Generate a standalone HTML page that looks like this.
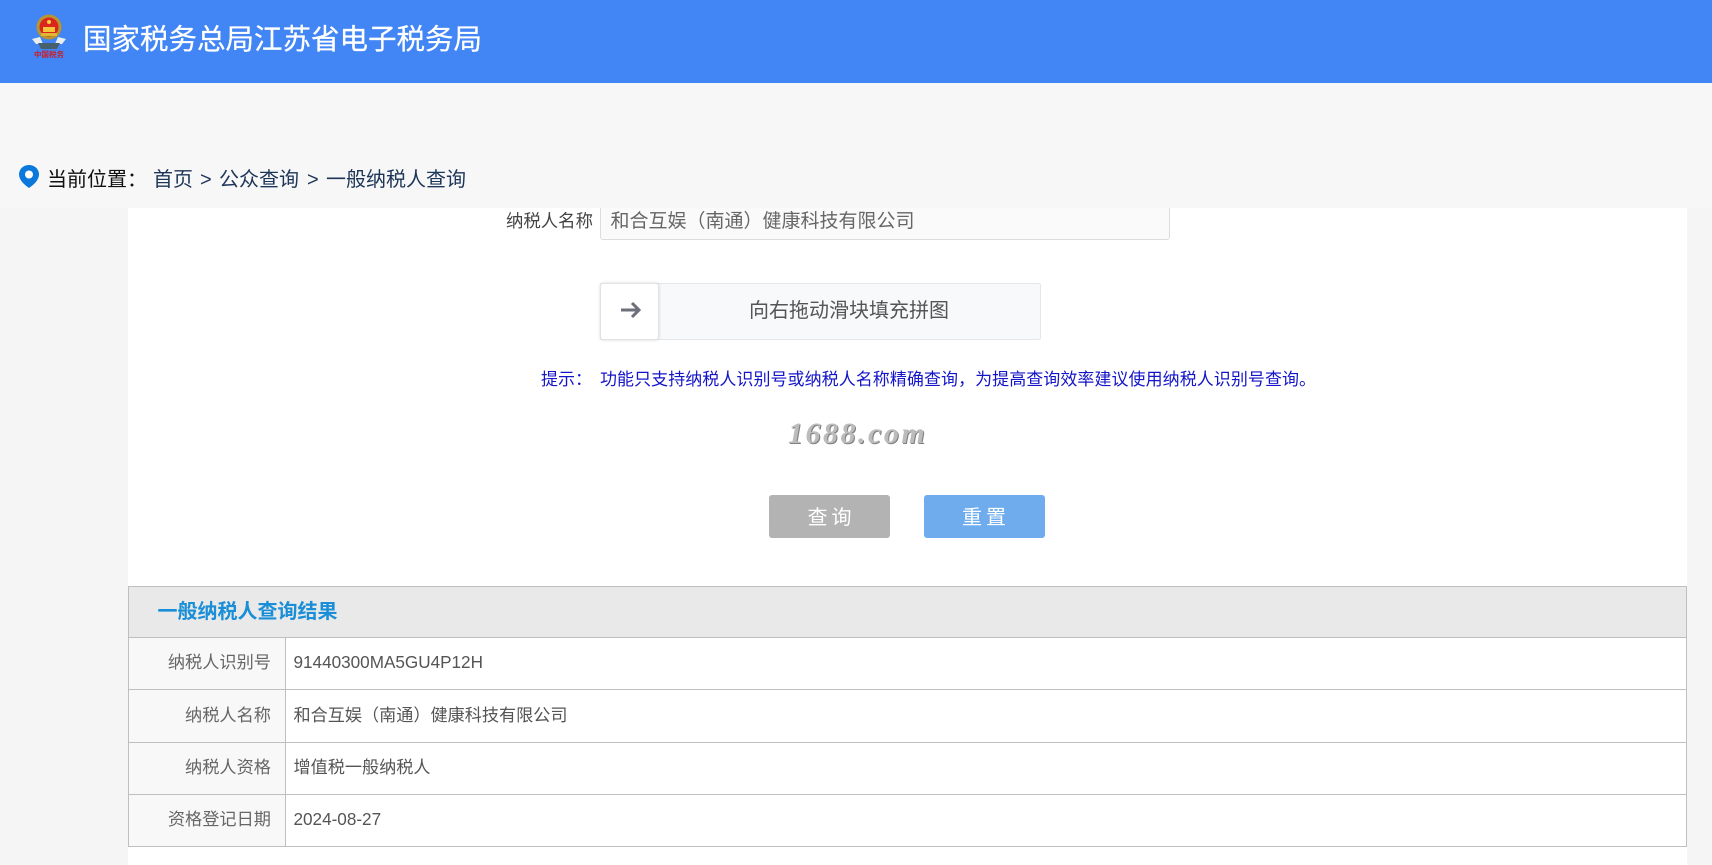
<!DOCTYPE html>
<html lang="zh-CN">
<head>
<meta charset="utf-8">
<title>一般纳税人查询</title>
<style>
html,body{margin:0;padding:0;width:1712px;height:865px;overflow:hidden;background:#f5f5f5;}
body{position:relative;font-family:"Liberation Sans","Noto Sans CJK SC",sans-serif;}
.a{position:absolute;white-space:nowrap;}
.t{position:absolute;white-space:nowrap;line-height:30px;height:30px;}
.cell{position:absolute;background:#bfbfbf;}
.lab{position:absolute;white-space:nowrap;line-height:30px;height:30px;font-size:17.2px;color:#666;text-align:right;left:130px;width:141px;}
.val{position:absolute;white-space:nowrap;line-height:30px;height:30px;font-size:17.14px;color:#555;left:293.500px;}
</style>
</head>
<body>
<div class="a" style="left:0;top:0;width:1712px;height:83px;background:#4285f4;"></div>
<svg class="a" style="left:30px;top:12px;" width="38" height="50" viewBox="0 0 38 50">
  <path d="M2 27 L10 25 L13 32 L6 32Z" fill="#e8eef2"/>
  <path d="M36 27 L28 25 L25 32 L32 32Z" fill="#e8eef2"/>
  <path d="M8 31 L30 31 L27 37 L11 37Z" fill="#47606e"/>
  <circle cx="19" cy="15" r="12.5" fill="#b8952f"/>
  <circle cx="19" cy="15" r="9.5" fill="#d9251d"/>
  <circle cx="19" cy="10" r="2" fill="#f6d23d"/>
  <rect x="13" y="15" width="12" height="5" fill="#f4c63a"/>
  <rect x="11" y="21" width="16" height="3" fill="#e3b534"/>
  <text x="19" y="45" text-anchor="middle" font-size="7.5" fill="#c8202a" font-family="Noto Sans CJK SC,sans-serif" font-weight="700">中国税务</text>
</svg>
<div class="a" style="left:83px;top:18px;line-height:44px;font-size:28.5px;color:#fff;-webkit-text-stroke:.25px #fff;">国家税务总局江苏省电子税务局</div>

<div class="a" style="left:0;top:83px;width:1712px;height:125px;background:#f7f7f7;"></div>
<svg class="a" style="left:18px;top:164px;" width="22" height="25" viewBox="0 0 22 25">
  <path d="M11 1C5 1 1 5.500 1 10.500C1 16 6.500 21 11 24C15.500 21 21 16 21 10.500C21 5.500 17 1 11 1Z" fill="#0b78dc"/>
  <circle cx="11" cy="10.500" r="4" fill="#fff"/>
</svg>
<div class="t" style="left:47px;top:165px;font-size:20px;color:#111;">当前位置：</div>
<div class="t" style="left:153px;top:165px;font-size:20px;color:#1d3557;">首页</div>
<div class="t" style="left:200px;top:165px;font-size:20px;color:#1d3557;">&gt;</div>
<div class="t" style="left:219px;top:165px;font-size:20px;color:#1d3557;">公众查询</div>
<div class="t" style="left:307px;top:165px;font-size:20px;color:#1d3557;">&gt;</div>
<div class="t" style="left:326px;top:165px;font-size:20px;color:#1d3557;">一般纳税人查询</div>

<div class="a" style="left:128px;top:208px;width:1559px;height:657px;background:#fff;"></div>

<div class="t" style="left:506px;top:206px;font-size:17.4px;color:#444;">纳税人名称</div>
<div class="a" style="left:600px;top:208px;width:568px;height:31px;background:#fafafa;border:1px solid #ddd;border-top:0;border-radius:0 0 3px 3px;"></div>
<div class="t" style="left:610.500px;top:207px;font-size:19px;color:#666;">和合互娱（南通）健康科技有限公司</div>

<div class="a" style="left:600px;top:283px;width:439px;height:55px;background:#f7f9fa;border:1px solid #e4e7eb;border-radius:2px;"></div>
<div class="a" style="left:600px;top:283px;width:57px;height:55px;background:#fff;border:1px solid #e2e2e2;border-radius:3px;box-shadow:0 0 3px rgba(0,0,0,.15);"></div>
<svg class="a" style="left:620px;top:300px;" width="22" height="20" viewBox="0 0 22 20">
  <path d="M1 10H19M12 3L19 10L12 17" fill="none" stroke="#6d6f7b" stroke-width="3"/>
</svg>
<div class="t" style="left:749px;top:296px;font-size:20px;color:#555;">向右拖动滑块填充拼图</div>

<div class="t" style="left:541px;top:365px;font-size:17px;color:#1414c8;">提示：</div>
<div class="t" style="left:600px;top:365px;font-size:17px;letter-spacing:.05px;color:#1414c8;">功能只支持纳税人识别号或纳税人名称精确查询，为提高查询效率建议使用纳税人识别号查询。</div>

<div class="a" style="left:788px;top:418px;line-height:32px;font-family:'Liberation Serif',serif;font-style:italic;font-weight:700;font-size:30px;letter-spacing:2.500px;color:#bcbcbc;text-shadow:1px 1px 0 #808080;">1688.com</div>

<div class="a" style="left:769px;top:495px;width:121px;height:43px;background:#b3b3b3;border-radius:3px;"></div>
<div class="a" style="left:924px;top:495px;width:121px;height:43px;background:#6eacee;border-radius:3px;"></div>
<div class="t" style="left:807.500px;top:503px;font-size:20px;letter-spacing:4px;color:#fff;">查询</div>
<div class="t" style="left:962px;top:503px;font-size:20px;letter-spacing:4px;color:#fff;">重置</div>

<div class="a" style="left:128px;top:586px;width:1558px;height:52px;background:#e9e9e9;"></div>
<div class="a" style="left:129px;top:638px;width:156px;height:208px;background:#f8f8f8;"></div>
<div class="cell" style="left:128px;top:586px;width:1559px;height:1px;"></div>
<div class="cell" style="left:128px;top:637px;width:1559px;height:1px;"></div>
<div class="cell" style="left:128px;top:689px;width:1559px;height:1px;"></div>
<div class="cell" style="left:128px;top:742px;width:1559px;height:1px;"></div>
<div class="cell" style="left:128px;top:794px;width:1559px;height:1px;"></div>
<div class="cell" style="left:128px;top:846px;width:1559px;height:1px;"></div>
<div class="cell" style="left:128px;top:586px;width:1px;height:261px;"></div>
<div class="cell" style="left:1686px;top:586px;width:1px;height:261px;"></div>
<div class="cell" style="left:285px;top:637px;width:1px;height:210px;"></div>

<div class="t" style="left:157.500px;top:597px;font-size:20px;font-weight:700;color:#1a8fd8;">一般纳税人查询结果</div>

<div class="lab" style="top:647px;">纳税人识别号</div>
<div class="val" style="top:647px;">91440300MA5GU4P12H</div>
<div class="lab" style="top:700px;">纳税人名称</div>
<div class="val" style="top:700px;">和合互娱（南通）健康科技有限公司</div>
<div class="lab" style="top:752px;">纳税人资格</div>
<div class="val" style="top:752px;">增值税一般纳税人</div>
<div class="lab" style="top:804px;">资格登记日期</div>
<div class="val" style="top:804px;">2024-08-27</div>
</body>
</html>
